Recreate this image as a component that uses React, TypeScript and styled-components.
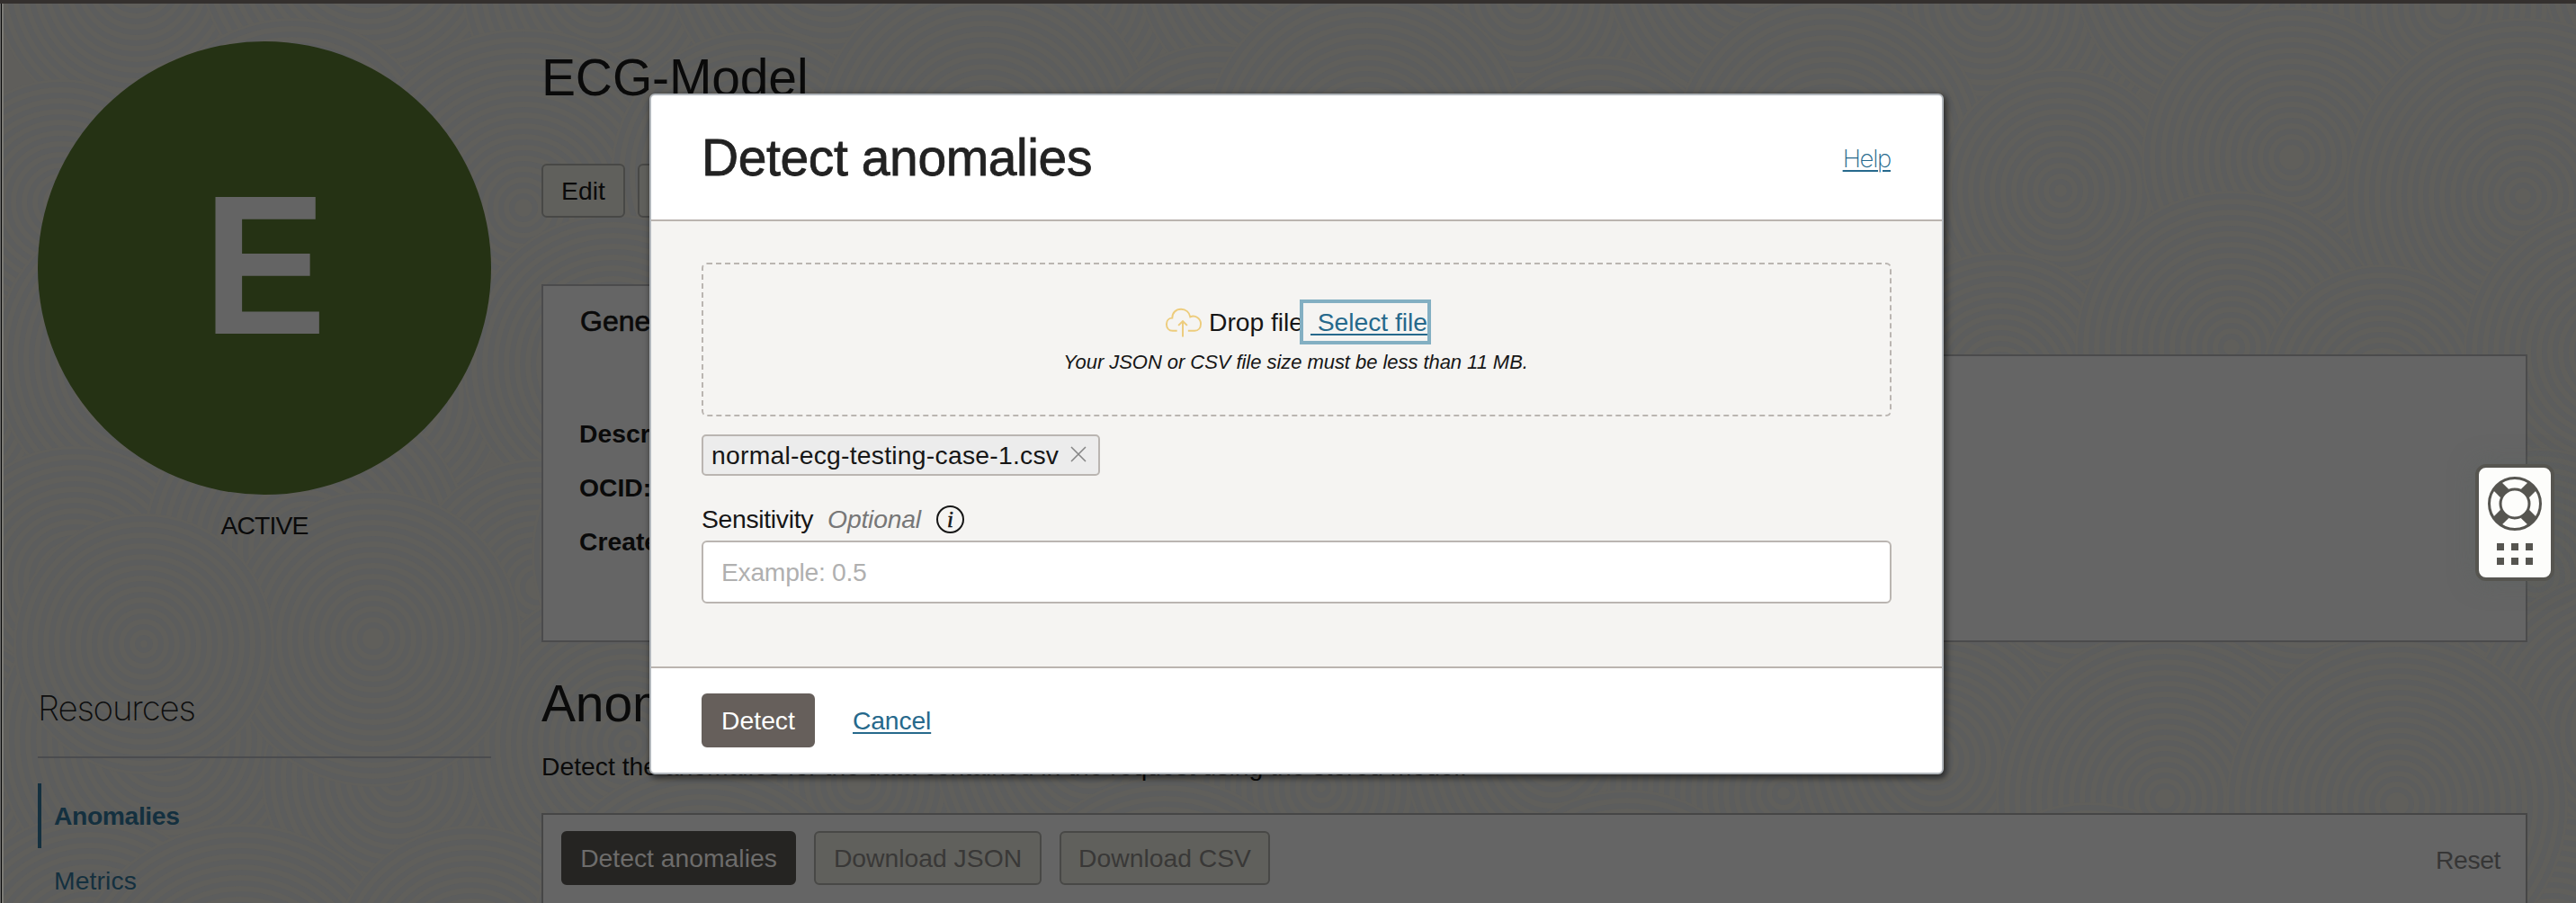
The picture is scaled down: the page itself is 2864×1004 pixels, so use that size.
import React from "react";
import styled, { createGlobalStyle, css } from "styled-components";

const GlobalStyle = createGlobalStyle`
  *, *::before, *::after { box-sizing: border-box; }
  body { margin: 0; background: #5f5e5b; overflow: hidden; }
  h1, h2, h3, p { margin: 0; font-weight: 400; }
  button, input { font: inherit; margin: 0; }
`;

const sans = `"Liberation Sans", Arial, sans-serif`;

const Page = styled.div`
  position: relative;
  width: 2864px;
  height: 1004px;
  overflow: hidden;
  background: #5f5e5b;
  border-top: 4px solid #34302e;
  font-family: ${sans};
  font-size: 28.3px;
  line-height: 34px;
  color: #0a0a0a;
`;

const LeftEdge = styled.div`
  position: absolute;
  z-index: 1;
  left: 0;
  top: -4px;
  bottom: 0;
  width: 4px;
  background: linear-gradient(90deg, #6a6a68 0 1px, #080808 1px 2px, #7a7974 2px 4px);
`;

const Texture = styled.svg`
  position: absolute;
  inset: 0;
  width: 2864px;
  height: 1000px;
`;

const Columns = styled.div`
  position: relative;
  display: grid;
  grid-template-columns: 504px 2208px;
  column-gap: 56px;
  padding-left: 42px;
`;

const Sidebar = styled.aside`
  display: flex;
  flex-direction: column;
  padding-top: 42px;
`;

const StatusCircle = styled.div`
  display: flex;
  align-items: center;
  justify-content: center;
  width: 504px;
  height: 504px;
  border-radius: 50%;
  background: #253214;
`;

const StatusLetter = styled.span`
  font-size: 220px;
  line-height: 220px;
  font-weight: 700;
  color: #646464;
  transform: translate(0, -3px) scaleX(0.935);
`;

const StatusText = styled.div`
  margin-top: 17px;
  text-align: center;
  letter-spacing: -0.9px;
`;

const ResourcesTitle = styled.h3`
  margin-top: 162px;
  height: 80px;
  font-family: Inter, ${sans};
  font-weight: 200;
  font-size: 38.5px;
  line-height: 48px;
  letter-spacing: -1.2px;
  color: #0d0d0d;
  border-bottom: 2px solid #4b4c4e;
`;

const ResourceList = styled.nav`
  display: flex;
  flex-direction: column;
  margin-top: 28px;
`;

const ResourceItem = styled.a<{ $active?: boolean }>`
  height: 72px;
  padding: 19px 0 0 14px;
  border-left: 4px solid transparent;
  color: #14303f;
  letter-spacing: 0.1px;
  ${(p) =>
    p.$active &&
    css`
      border-left-color: #14303f;
      font-weight: 700;
      letter-spacing: -0.4px;
    `}
`;

const Main = styled.main`
  display: flex;
  flex-direction: column;
  padding-top: 49px;
`;

const Heading = styled.h1`
  font-size: 57px;
  line-height: 66px;
  height: 66px;
  white-space: nowrap;
  letter-spacing: -0.15px;
`;

const ButtonRow = styled.div<{ $top?: number }>`
  display: flex;
  margin-top: ${(p) => p.$top ?? 0}px;
`;

const Button = styled.button<{ $kind?: "plain" | "muted" | "dark" | "primary"; $width: number }>`
  height: 60px;
  width: ${(p) => p.$width}px;
  padding: 0;
  border: 2px solid #484846;
  border-radius: 6px;
  background: #60605c;
  color: #0a0a0a;
  white-space: nowrap;
  ${(p) =>
    p.$kind === "muted" &&
    css`
      color: #393837;
    `}
  ${(p) =>
    p.$kind === "dark" &&
    css`
      border-color: #252422;
      background: #252422;
      color: #6d6c6b;
    `}
  ${(p) =>
    p.$kind === "primary" &&
    css`
      border-color: #665f5b;
      background: #665f5b;
      color: #fff;
    `}
`;

const TopActions = styled(ButtonRow)`
  gap: 14px;
`;

const Tab = styled.div`
  position: relative;
  z-index: 1;
  width: 330px;
  height: 80px;
  margin-top: 74px;
  padding: 20px 0 0 41px;
  border: 2px solid #4b4b4c;
  border-bottom: 0;
  background: #656565;
  font-size: 32px;
  line-height: 38px;
  -webkit-text-stroke: 0.7px #0a0a0a;
`;

const InfoCard = styled.section`
  display: flex;
  flex-direction: column;
  height: 320px;
  margin-top: -2px;
  padding: 69px 0 0 40px;
  border: 2px solid #4b4b4c;
  background: #656565;
`;

const InfoLabel = styled.div`
  height: 60px;
  font-weight: 700;
  line-height: 34px;
`;

const SectionHeading = styled(Heading)`
  margin-top: 35px;
`;

const SectionText = styled.p`
  margin-top: 20px;
  height: 69px;
`;

const Toolbar = styled.section`
  display: flex;
  justify-content: space-between;
  height: 120px;
  padding: 18px 28px 0 20px;
  border: 2px solid #464646;
  background: #656565;
`;

const ToolbarButtons = styled.div`
  display: flex;
  gap: 20px;
`;

const Reset = styled.span`
  padding-top: 15px;
  color: #363636;
  letter-spacing: -0.4px;
`;

/* ---- dialog ---- */

const Dialog = styled.div`
  position: absolute;
  z-index: 2;
  left: 722px;
  top: 100px;
  width: 1439px;
  height: 757px;
  display: flex;
  flex-direction: column;
  border: 2px solid #b1b6bb;
  border-radius: 6px;
  background: #fff;
  color: #161616;
  box-shadow: 2px 3px 7px 1px rgba(0, 0, 0, 0.55);
  overflow: hidden;
`;

const DialogHeader = styled.header`
  display: flex;
  justify-content: space-between;
  flex: none;
  height: 140px;
  padding: 36px 57px 0 56px;
  border-bottom: 2px solid #bab4af;
`;

const DialogTitle = styled.h2`
  font-size: 57px;
  line-height: 66px;
  color: #222;
  letter-spacing: -0.4px;
  -webkit-text-stroke: 0.8px #222;
`;

const HelpLink = styled.a`
  margin-top: 17px;
  font-family: Inter, ${sans};
  font-weight: 200;
  font-size: 27.5px;
  letter-spacing: -1.3px;
  color: #26698c;
  text-decoration: underline;
  text-decoration-thickness: 2px;
  text-underline-offset: 3px;
`;

const DialogBody = styled.div`
  display: flex;
  flex-direction: column;
  align-items: flex-start;
  flex: 1;
  padding: 46px 56px 0;
  background: #f5f4f2;
`;

const DropZone = styled.div`
  display: flex;
  flex-direction: column;
  align-items: center;
  width: 1323px;
  height: 171px;
  padding-top: 40px;
  border: 2px dashed #bab5b1;
  border-radius: 6px;
`;

const DropRow = styled.div`
  display: flex;
  align-items: flex-start;
  margin-left: -1px;
`;

const CloudIcon = styled.svg`
  width: 41px;
  height: 34px;
  margin: 7px 8px 0 0;
`;

const DropLabel = styled.span`
  padding-top: 7px;
  letter-spacing: -0.05px;
`;

const SelectLink = styled.a`
  height: 42px;
  padding: 4px 0 0 8px;
  margin-top: 3px;
  outline: 4px solid #83afc2;
  color: #26698c;
  white-space: pre;
  letter-spacing: -0.05px;
  text-decoration: underline;
  text-decoration-thickness: 2px;
  text-underline-offset: 3px;
  text-decoration-skip-ink: none;
`;

const Hint = styled.p`
  margin-top: 10px;
  margin-left: -2px;
  font-size: 22px;
  line-height: 28px;
  font-style: italic;
  letter-spacing: -0.05px;
`;

const FileChip = styled.div`
  display: flex;
  height: 46px;
  width: 443px;
  margin-top: 20px;
  padding: 4px 0 0 9px;
  border: 2px solid #bab5b1;
  border-radius: 5px;
  background: #ececec;
  letter-spacing: 0.25px;
`;

const CloseIcon = styled.svg`
  width: 18px;
  height: 18px;
  margin: 7px 0 0 13px;
`;

const FieldLabel = styled.label`
  display: flex;
  margin-top: 31px;
  height: 41px;
`;

const LabelText = styled.span`
  letter-spacing: -0.3px;
`;

const OptionalText = styled.span`
  margin-left: 16px;
  font-style: italic;
  color: #777;
  letter-spacing: -0.2px;
`;

const InfoBadge = styled.span`
  display: flex;
  align-items: center;
  justify-content: center;
  width: 31px;
  height: 31px;
  margin: 2px 0 0 17px;
  border: 2px solid #161616;
  border-radius: 50%;
  font: italic 400 25px/26px "Liberation Serif", "Times New Roman", serif;
  -webkit-text-stroke: 0.6px #161616;
`;

const Field = styled.input`
  width: 1323px;
  height: 70px;
  padding: 0 20px;
  border: 2px solid #bab5b1;
  border-radius: 6px;
  background: #fff;
  outline: none;
  letter-spacing: -0.3px;
  &::placeholder {
    color: #b0b0b0;
    opacity: 1;
  }
`;

const DialogFooter = styled.footer`
  display: flex;
  flex: none;
  height: 118px;
  padding: 28px 56px 0;
  border-top: 2px solid #bab4af;
`;

const CancelLink = styled.a`
  margin: 13px 0 0 42px;
  color: #26698c;
  letter-spacing: -0.15px;
  text-decoration: underline;
  text-decoration-thickness: 2px;
  text-underline-offset: 3px;
`;

/* ---- floating support widget ---- */

const Support = styled.div`
  position: absolute;
  z-index: 3;
  left: 2752px;
  top: 512px;
  width: 88px;
  height: 130px;
  display: flex;
  flex-direction: column;
  align-items: center;
  padding-top: 10px;
  border: 4px solid #565550;
  border-radius: 12px;
  background: #fdfdfb;
  box-shadow: 0 0 28px rgba(90, 98, 96, 0.5);
`;

const DotGrid = styled.div`
  display: grid;
  grid-template-columns: repeat(3, 8px);
  gap: 8px;
  margin-top: 14px;
`;

const Dot = styled.i`
  height: 8px;
  background: #565550;
`;

const discs: [number, number, number][] = [];
for (let row = 0; row < 6; row++) {
  for (let col = 0; col < 13; col++) {
    const jitterX = ((row * 53 + col * 97) % 90) - 45;
    const jitterY = ((row * 71 + col * 43) % 80) - 40;
    discs.push([col * 250 + (row % 2) * 120 + jitterX - 60, row * 220 + jitterY - 30, 130 + ((row * 7 + col * 31) % 70)]);
  }
}
discs.push([415, 706, 165], [160, 712, 145], [2665, 890, 190]);

function Rings() {
  return (
    <Texture viewBox="0 0 2864 1000">
      {discs.map(([cx, cy, r], i) => (
        <g key={i} fill="none" stroke="#5c5d5d" strokeWidth="6">
          <circle cx={cx} cy={cy} r={r} fill="#605f5b" stroke="none" />
          {Array.from({ length: Math.floor(r / 12) }, (_, k) => (
            <circle key={k} cx={cx} cy={cy} r={r - 6 - k * 12} />
          ))}
        </g>
      ))}
    </Texture>
  );
}

function LifeRing() {
  return (
    <svg width="60" height="60" viewBox="-30 -30 60 60" fill="none" stroke="#565550">
      <circle r="28.5" strokeWidth="3" />
      <circle r="16" strokeWidth="3" />
      {[45, 135, 225, 315].map((a) => (
        <path key={a} d="M16 0H28.3" strokeWidth="13" transform={`rotate(${a})`} />
      ))}
    </svg>
  );
}

export default function App() {
  return (
    <>
      <GlobalStyle />
      <Page>
        <Rings />
        <LeftEdge />
        <Columns>
          <Sidebar>
            <StatusCircle>
              <StatusLetter>E</StatusLetter>
            </StatusCircle>
            <StatusText>ACTIVE</StatusText>
            <ResourcesTitle>Resources</ResourcesTitle>
            <ResourceList>
              <ResourceItem $active>Anomalies</ResourceItem>
              <ResourceItem>Metrics</ResourceItem>
            </ResourceList>
          </Sidebar>
          <Main>
            <Heading>ECG-Model</Heading>
            <TopActions $top={63}>
              <Button $width={93}>Edit</Button>
              <Button $width={140} />
            </TopActions>
            <Tab>General</Tab>
            <InfoCard>
              <InfoLabel>Description:</InfoLabel>
              <InfoLabel>OCID:</InfoLabel>
              <InfoLabel>Created:</InfoLabel>
            </InfoCard>
            <SectionHeading as="h2">Anomalies</SectionHeading>
            <SectionText>
              Detect the anomalies for the data contained in the request using the stored model.
            </SectionText>
            <Toolbar>
              <ToolbarButtons>
                <Button $kind="dark" $width={261}>Detect anomalies</Button>
                <Button $kind="muted" $width={253}>Download JSON</Button>
                <Button $kind="muted" $width={234}>Download CSV</Button>
              </ToolbarButtons>
              <Reset>Reset</Reset>
            </Toolbar>
          </Main>
        </Columns>

        <Dialog role="dialog">
          <DialogHeader>
            <DialogTitle>Detect anomalies</DialogTitle>
            <HelpLink>Help</HelpLink>
          </DialogHeader>
          <DialogBody>
            <DropZone>
              <DropRow>
                <CloudIcon viewBox="0 0 42 34" fill="none" stroke="#edcc7c" strokeWidth="2">
                  <path d="M14 27H9C4.500 27 2 23.500 2 19.500C2 15.500 4.500 12.500 8.500 12.500C8.500 6.500 12.500 2.500 18.500 2.500C24 2.500 28 6 29 11.200C34.500 8.500 41 13 41 19C41 24 38 27 34 27H26.500" />
                  <path d="M20.500 34V16M15.500 21L20.500 16L25.500 21" />
                </CloudIcon>
                <DropLabel>Drop file</DropLabel>
                <SelectLink>{"\u00a0Select file"}</SelectLink>
              </DropRow>
              <Hint>Your JSON or CSV file size must be less than 11 MB.</Hint>
            </DropZone>
            <FileChip>
              normal-ecg-testing-case-1.csv
              <CloseIcon viewBox="0 0 18 18" stroke="#858585" strokeWidth="1.5">
                <path d="M1 1L17 17M17 1L1 17" />
              </CloseIcon>
            </FileChip>
            <FieldLabel>
              <LabelText>Sensitivity</LabelText>
              <OptionalText>Optional</OptionalText>
              <InfoBadge>i</InfoBadge>
            </FieldLabel>
            <Field placeholder="Example: 0.5" />
          </DialogBody>
          <DialogFooter>
            <Button $kind="primary" $width={126}>Detect</Button>
            <CancelLink>Cancel</CancelLink>
          </DialogFooter>
        </Dialog>

        <Support>
          <LifeRing />
          <DotGrid>
            {Array.from({ length: 6 }, (_, i) => (
              <Dot key={i} />
            ))}
          </DotGrid>
        </Support>
      </Page>
    </>
  );
}
